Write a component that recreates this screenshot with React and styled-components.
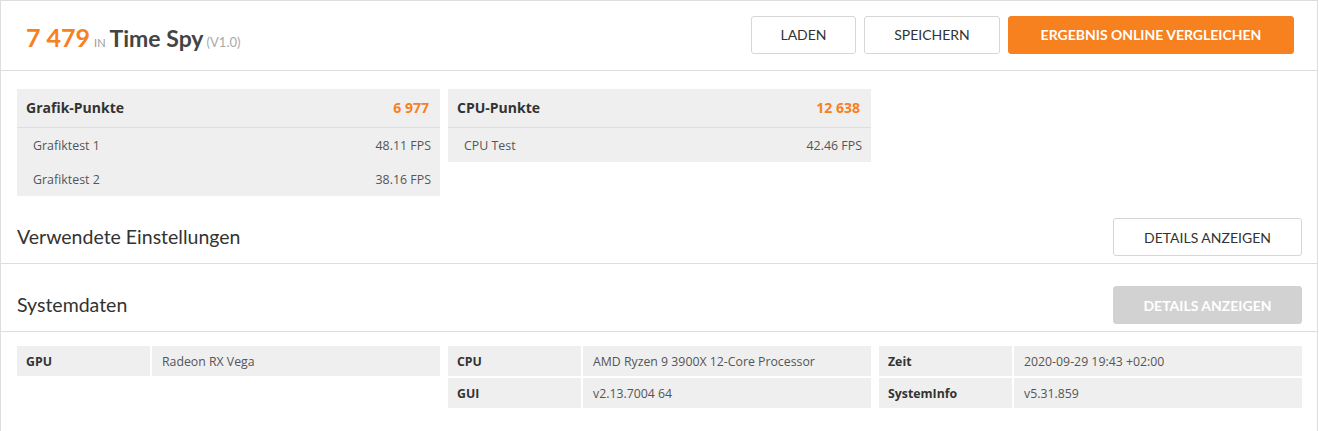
import React from "react";
import styled, { createGlobalStyle } from "styled-components";

const GlobalStyle = createGlobalStyle`
  html, body { margin: 0; padding: 0; background: #fff; }
  * { box-sizing: border-box; }
`;

const ORANGE = "#f7801f";
const LINE = "#dedede";
const CELL = "#efefef";

const Page = styled.div`
  width: 1318px;
  min-height: 431px;
  border: 1px solid ${LINE};
  border-bottom: none;
  font-family: "Open Sans", "Liberation Sans", sans-serif;
  color: #333;
`;

const Header = styled.header`
  height: 70px;
  border-bottom: 1px solid ${LINE};
  display: flex;
  align-items: center;
  justify-content: space-between;
  padding: 0 23px 2px 25px;
`;

const Title = styled.h1`
  margin: 0;
  display: flex;
  align-items: baseline;
  gap: 4px;
  font-family: Lato, "Liberation Sans", sans-serif;
  font-weight: 700;
  padding-top: 4px;
`;

const Score = styled.span`
  font-size: 25px;
  color: ${ORANGE};
`;

const In = styled.span`
  font-size: 11px;
  font-weight: 400;
  color: #9a9a9a;
  text-transform: uppercase;
`;

const Bench = styled.span`
  font-size: 23px;
  color: #444;
`;

const Version = styled.span`
  font-size: 13px;
  font-weight: 400;
  color: #aaa;
  margin-left: -1px;
`;

const Actions = styled.div`
  display: flex;
  gap: 8px;
`;

const Button = styled.button`
  width: ${(p) => p.$w}px;
  height: 38px;
  padding: 0;
  border-radius: 3px;
  font-family: Lato, "Liberation Sans", sans-serif;
  font-size: 14px;
  text-transform: uppercase;
  cursor: pointer;
  ${(p) =>
    p.$variant === "primary"
      ? `background: ${ORANGE}; border: 1px solid ${ORANGE}; color: #fff; font-weight: 700;`
      : p.$variant === "disabled"
      ? `background: #d2d2d2; border: 1px solid #d2d2d2; color: #fff; font-weight: 700;`
      : `background: #fff; border: 1px solid #d6d6d6; color: #333; font-weight: 400;`}
`;

const Grid3 = styled.div`
  display: grid;
  grid-template-columns: repeat(3, 423px);
  column-gap: 8px;
  align-items: start;
`;

const ScoreArea = styled.section`
  padding: 18px 15px 0 16px;
`;

const Card = styled.div`
  background: ${CELL};
`;

const CardHead = styled.div`
  height: 39px;
  border-bottom: 1px solid ${LINE};
  display: flex;
  align-items: center;
  justify-content: space-between;
  padding: 0 11px 1px 9px;
  font-size: 14px;
  font-weight: 700;
  color: #333;
`;

const CardValue = styled.span`
  color: ${ORANGE};
`;

const CardRow = styled.div`
  height: 34px;
  display: flex;
  align-items: center;
  justify-content: space-between;
  padding: 0 9px 0 16px;
  font-size: 12.4px;
  color: #555;
`;

const Section = styled.section`
  height: 68px;
  border-bottom: 1px solid ${LINE};
  display: flex;
  align-items: flex-start;
  justify-content: space-between;
  padding: 22px 15px 0 16px;
`;

const SectionTitle = styled.h2`
  margin: 0;
  line-height: 38px;
  font-family: Lato, "Liberation Sans", sans-serif;
  font-size: 19.5px;
  font-weight: 400;
  color: #333;
`;

const SysArea = styled.section`
  padding: 14px 15px 0 16px;
`;

const SysTable = styled.div`
  display: grid;
  grid-template-columns: 133px 1fr;
  gap: 2px;
`;

const SysCell = styled.div`
  height: 30px;
  background: ${CELL};
  display: flex;
  align-items: center;
  padding-left: ${(p) => (p.$label ? 9 : 10)}px;
  font-size: 12.3px;
  font-weight: ${(p) => (p.$label ? 700 : 400)};
  color: ${(p) => (p.$label ? "#333" : "#555")};
`;

const scores = [
  {
    title: "Grafik-Punkte",
    value: "6 977",
    rows: [
      ["Grafiktest 1", "48.11 FPS"],
      ["Grafiktest 2", "38.16 FPS"],
    ],
  },
  {
    title: "CPU-Punkte",
    value: "12 638",
    rows: [["CPU Test", "42.46 FPS"]],
  },
];

const sysdata = [
  [["GPU", "Radeon RX Vega"]],
  [
    ["CPU", "AMD Ryzen 9 3900X 12-Core Processor"],
    ["GUI", "v2.13.7004 64"],
  ],
  [
    ["Zeit", "2020-09-29 19:43 +02:00"],
    ["SystemInfo", "v5.31.859"],
  ],
];

export default function App() {
  return (
    <>
      <GlobalStyle />
      <Page>
        <Header>
          <Title>
            <Score>7 479</Score>
            <In>in</In>
            <Bench>Time Spy</Bench>
            <Version>(V1.0)</Version>
          </Title>
          <Actions>
            <Button $w={105}>Laden</Button>
            <Button $w={136}>Speichern</Button>
            <Button $variant="primary" $w={286}>
              Ergebnis online vergleichen
            </Button>
          </Actions>
        </Header>

        <ScoreArea>
          <Grid3>
            {scores.map((s) => (
              <Card key={s.title}>
                <CardHead>
                  <span>{s.title}</span>
                  <CardValue>{s.value}</CardValue>
                </CardHead>
                {s.rows.map(([l, v]) => (
                  <CardRow key={l}>
                    <span>{l}</span>
                    <span>{v}</span>
                  </CardRow>
                ))}
              </Card>
            ))}
          </Grid3>
        </ScoreArea>

        <Section>
          <SectionTitle>Verwendete Einstellungen</SectionTitle>
          <Button $w={189}>Details anzeigen</Button>
        </Section>

        <Section>
          <SectionTitle>Systemdaten</SectionTitle>
          <Button $variant="disabled" $w={189}>
            Details anzeigen
          </Button>
        </Section>

        <SysArea>
          <Grid3>
            {sysdata.map((col, i) => (
              <SysTable key={i}>
                {col.map(([l, v]) => (
                  <React.Fragment key={l}>
                    <SysCell $label>{l}</SysCell>
                    <SysCell>{v}</SysCell>
                  </React.Fragment>
                ))}
              </SysTable>
            ))}
          </Grid3>
        </SysArea>
      </Page>
    </>
  );
}
